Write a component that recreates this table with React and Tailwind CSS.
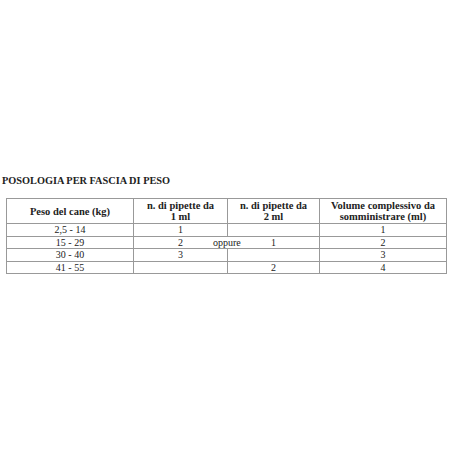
import React from 'react';

const rows = [
  { peso: '2,5 - 14', ml1: '1', ml2: '', vol: '1' },
  { peso: '15 - 29', ml1: '2', ml2: '1', vol: '2', oppure: true },
  { peso: '30 - 40', ml1: '3', ml2: '', vol: '3' },
  { peso: '41 - 55', ml1: '', ml2: '2', vol: '4' },
];

export default function App() {
  return (
    <div className="w-[450px] h-[450px] bg-white text-[#222] font-['Liberation_Serif',serif]">
      <div className="pt-[174px] pl-[2px] text-[10.3px] font-bold leading-[14px]">POSOLOGIA PER FASCIA DI PESO</div>

      <table className="ml-[6px] mt-[10px] border-collapse text-[10px] leading-[11px] font-['Liberation_Serif',serif]">
        <thead>
          <tr className="h-[25px] text-[10.5px]">
            <th className="w-[127px] border border-[#999] font-bold">Peso del cane (kg)</th>
            <th className="w-[94px] border border-[#999] font-bold">n. di pipette da<br />1 ml</th>
            <th className="w-[92px] border border-[#999] font-bold">n. di pipette da<br />2 ml</th>
            <th className="w-[127px] border border-[#999] font-bold">Volume complessivo da<br />somministrare (ml)</th>
          </tr>
        </thead>
        <tbody>
          {rows.map((r) => (
            <tr key={r.peso} className="h-[12.5px] text-center">
              <td className="border border-[#999] p-0">{r.peso}</td>
              <td className="border border-[#999] p-0 relative">
                {r.ml1}
                {r.oppure && (
                  <span className="absolute left-[78px] top-0 bg-white px-[1px]">oppure</span>
                )}
              </td>
              <td className="border border-[#999] p-0">{r.ml2}</td>
              <td className="border border-[#999] p-0">{r.vol}</td>
            </tr>
          ))}
        </tbody>
      </table>
    </div>
  );
}
